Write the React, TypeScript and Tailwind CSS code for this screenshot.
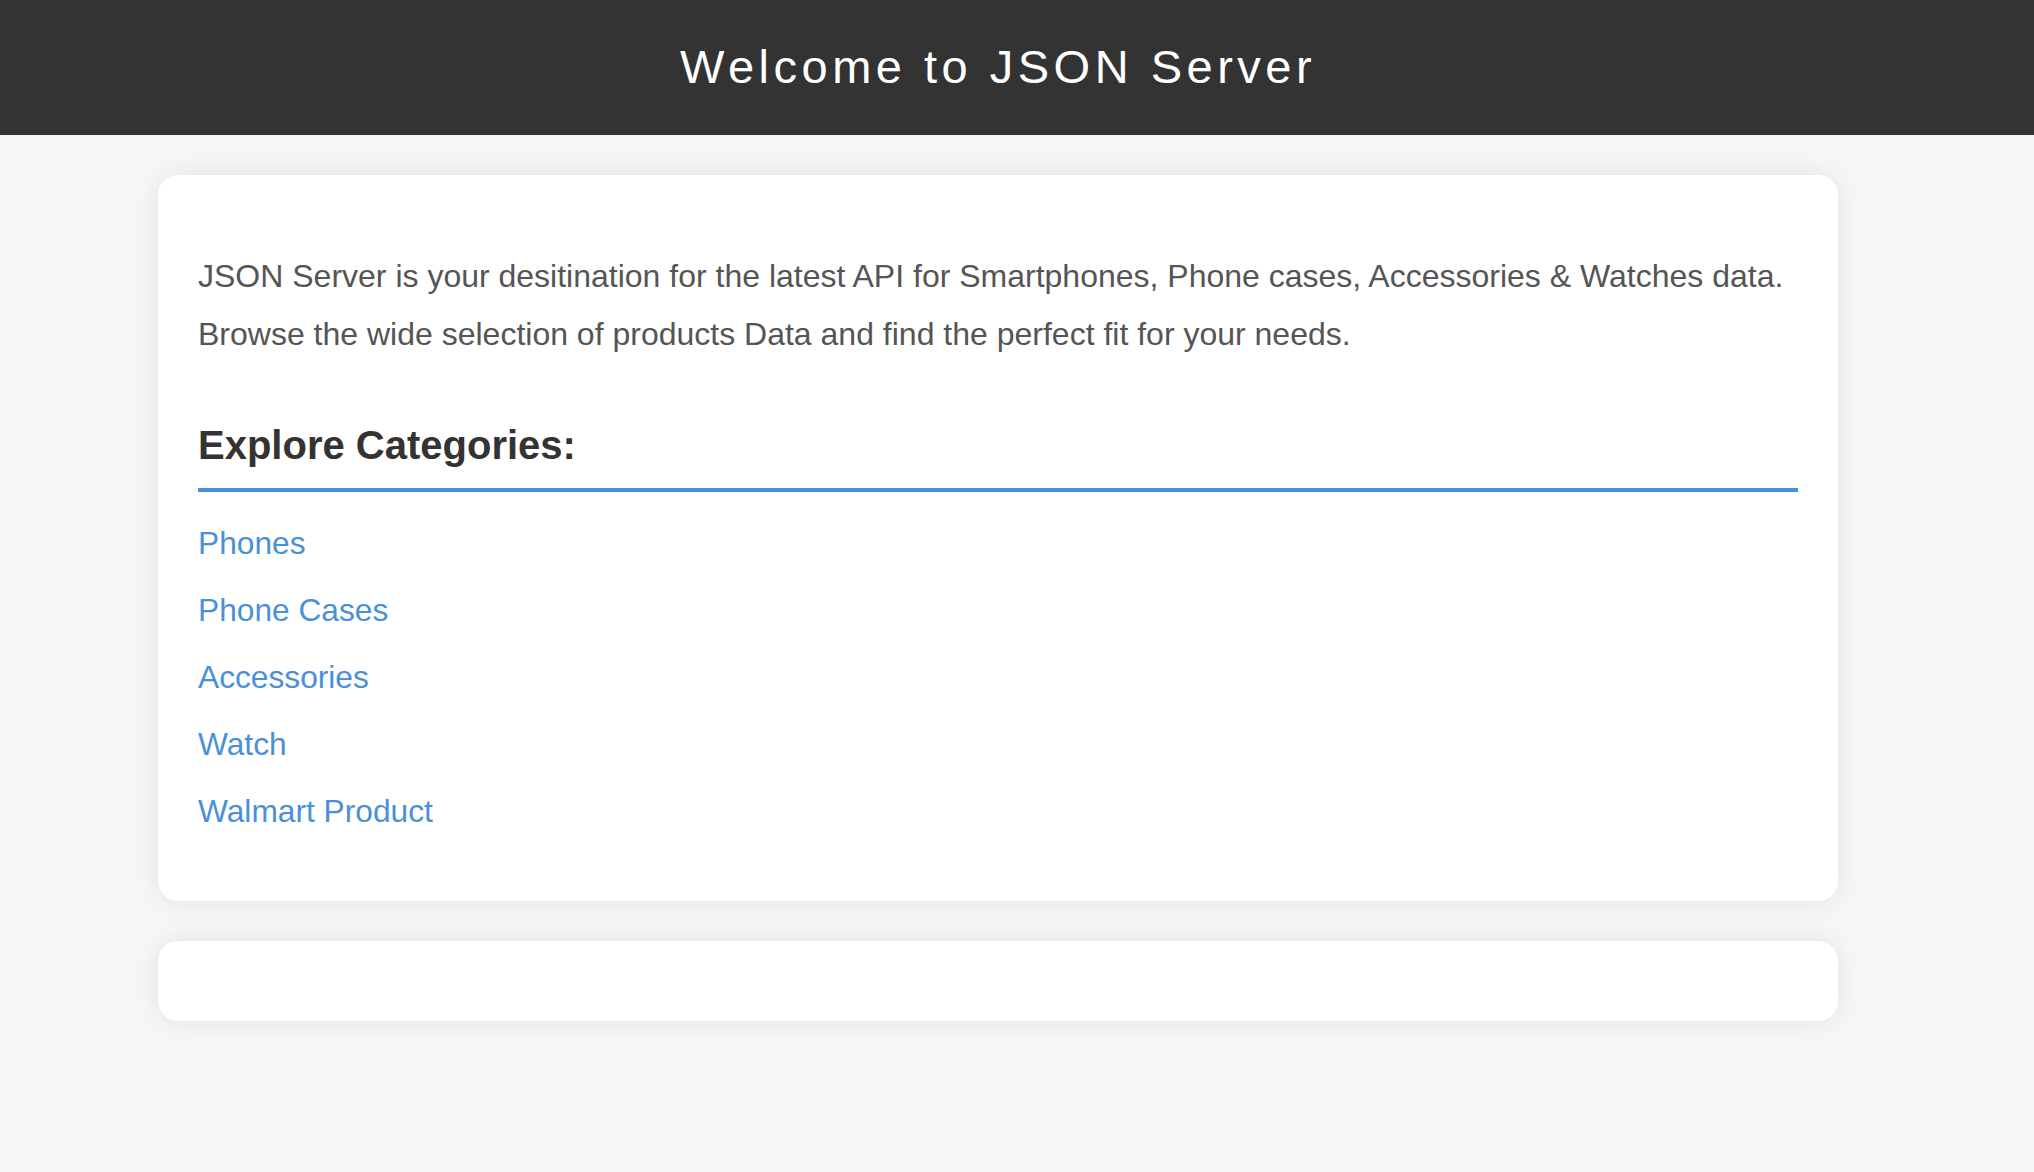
const categories = ["Phones", "Phone Cases", "Accessories", "Watch", "Walmart Product"];

export default function App() {
  return (
    <div className="min-h-screen bg-[#f7f7f7] font-['Liberation_Sans',Arial,sans-serif]">
      <header className="flex h-[135px] items-center justify-center bg-[#333333] pr-[38px] pb-[2px]">
        <h1 className="text-[47px] leading-none tracking-[4.5px] text-white">Welcome to JSON Server</h1>
      </header>

      <main className="flex flex-col gap-[40px] pl-[158px] pt-[40px] pb-[40px]">
        <section className="w-[1680px] rounded-[20px] bg-white px-[40px] pt-[72px] pb-[56px] shadow-[0_0_30px_rgba(0,0,0,0.09)]">
          <p className="text-[32px] leading-[58px] text-[#555555]">
            JSON Server is your desitination for the latest API for Smartphones, Phone cases, Accessories &amp; Watches data.
            Browse the wide selection of products Data and find the perfect fit for your needs.
          </p>

          <h2 className="mt-[62px] border-b-4 border-[#4a90d9] pb-[23px] text-[40px] leading-[40px] font-bold text-[#333333]">
            Explore Categories:
          </h2>

          <ul className="mt-[18px] flex flex-col">
            {categories.map((c) => (
              <li key={c} className="text-[31.7px] leading-[67px]">
                <a href="#" className="text-[#4a90d9]">
                  {c}
                </a>
              </li>
            ))}
          </ul>
        </section>

        <section className="h-[80px] w-[1680px] rounded-[20px] bg-white shadow-[0_0_30px_rgba(0,0,0,0.09)]" />
      </main>
    </div>
  );
}
